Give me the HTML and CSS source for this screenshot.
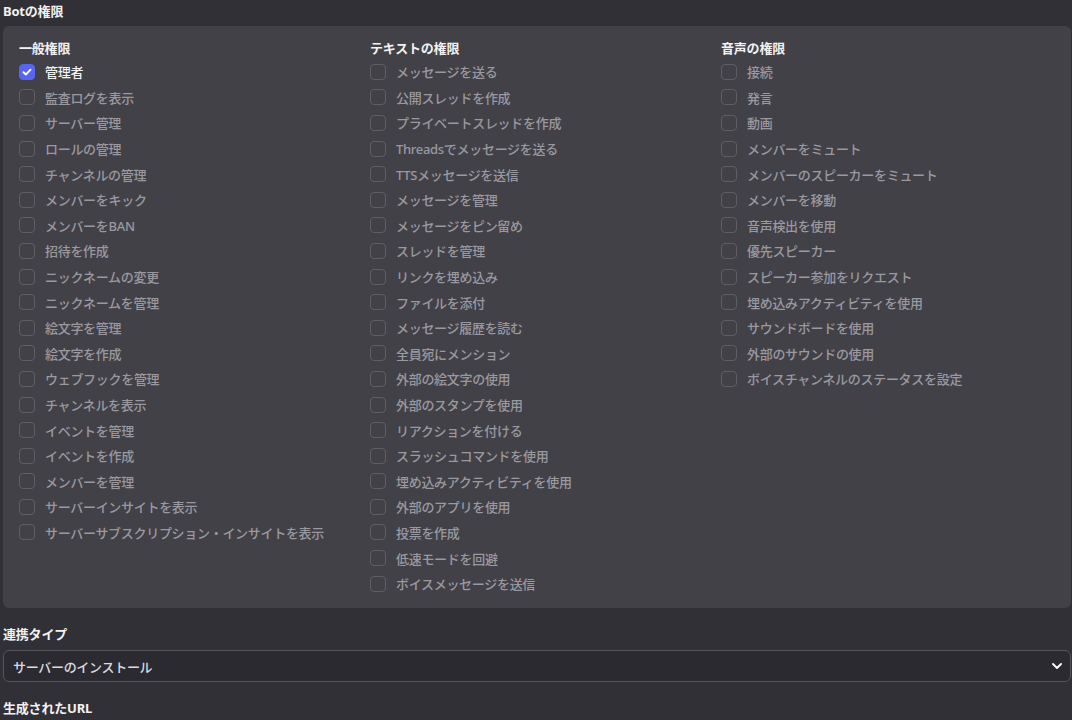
FILE: index.html
```html
<!DOCTYPE html>
<html lang="ja">
<head>
    <meta charset="UTF-8">
    <meta name="viewport" content="width=device-width, initial-scale=1.0">
    <title>Botの権限</title>
    <link rel="stylesheet" href="styles.css">
</head>
<body>
    <div class="page">
        <h2 class="section-title">Botの権限</h2>

        <div class="perm-panel">
            <div class="perm-column">
                <h3 class="column-title">一般権限</h3>
                <label class="perm-row checked"><span class="box"><svg viewBox="0 0 16 16" width="16" height="16"><path d="M4.5 8.2l2.4 2.3 4.6-4.8" fill="none" stroke="#fff" stroke-width="1.9" stroke-linecap="round" stroke-linejoin="round"/></svg></span>管理者</label>
                <label class="perm-row"><span class="box"></span>監査ログを表示</label>
                <label class="perm-row"><span class="box"></span>サーバー管理</label>
                <label class="perm-row"><span class="box"></span>ロールの管理</label>
                <label class="perm-row"><span class="box"></span>チャンネルの管理</label>
                <label class="perm-row"><span class="box"></span>メンバーをキック</label>
                <label class="perm-row"><span class="box"></span>メンバーをBAN</label>
                <label class="perm-row"><span class="box"></span>招待を作成</label>
                <label class="perm-row"><span class="box"></span>ニックネームの変更</label>
                <label class="perm-row"><span class="box"></span>ニックネームを管理</label>
                <label class="perm-row"><span class="box"></span>絵文字を管理</label>
                <label class="perm-row"><span class="box"></span>絵文字を作成</label>
                <label class="perm-row"><span class="box"></span>ウェブフックを管理</label>
                <label class="perm-row"><span class="box"></span>チャンネルを表示</label>
                <label class="perm-row"><span class="box"></span>イベントを管理</label>
                <label class="perm-row"><span class="box"></span>イベントを作成</label>
                <label class="perm-row"><span class="box"></span>メンバーを管理</label>
                <label class="perm-row"><span class="box"></span>サーバーインサイトを表示</label>
                <label class="perm-row"><span class="box"></span>サーバーサブスクリプション・インサイトを表示</label>
            </div>

            <div class="perm-column">
                <h3 class="column-title">テキストの権限</h3>
                <label class="perm-row"><span class="box"></span>メッセージを送る</label>
                <label class="perm-row"><span class="box"></span>公開スレッドを作成</label>
                <label class="perm-row"><span class="box"></span>プライベートスレッドを作成</label>
                <label class="perm-row"><span class="box"></span>Threadsでメッセージを送る</label>
                <label class="perm-row"><span class="box"></span>TTSメッセージを送信</label>
                <label class="perm-row"><span class="box"></span>メッセージを管理</label>
                <label class="perm-row"><span class="box"></span>メッセージをピン留め</label>
                <label class="perm-row"><span class="box"></span>スレッドを管理</label>
                <label class="perm-row"><span class="box"></span>リンクを埋め込み</label>
                <label class="perm-row"><span class="box"></span>ファイルを添付</label>
                <label class="perm-row"><span class="box"></span>メッセージ履歴を読む</label>
                <label class="perm-row"><span class="box"></span>全員宛にメンション</label>
                <label class="perm-row"><span class="box"></span>外部の絵文字の使用</label>
                <label class="perm-row"><span class="box"></span>外部のスタンプを使用</label>
                <label class="perm-row"><span class="box"></span>リアクションを付ける</label>
                <label class="perm-row"><span class="box"></span>スラッシュコマンドを使用</label>
                <label class="perm-row"><span class="box"></span>埋め込みアクティビティを使用</label>
                <label class="perm-row"><span class="box"></span>外部のアプリを使用</label>
                <label class="perm-row"><span class="box"></span>投票を作成</label>
                <label class="perm-row"><span class="box"></span>低速モードを回避</label>
                <label class="perm-row"><span class="box"></span>ボイスメッセージを送信</label>
            </div>

            <div class="perm-column">
                <h3 class="column-title">音声の権限</h3>
                <label class="perm-row"><span class="box"></span>接続</label>
                <label class="perm-row"><span class="box"></span>発言</label>
                <label class="perm-row"><span class="box"></span>動画</label>
                <label class="perm-row"><span class="box"></span>メンバーをミュート</label>
                <label class="perm-row"><span class="box"></span>メンバーのスピーカーをミュート</label>
                <label class="perm-row"><span class="box"></span>メンバーを移動</label>
                <label class="perm-row"><span class="box"></span>音声検出を使用</label>
                <label class="perm-row"><span class="box"></span>優先スピーカー</label>
                <label class="perm-row"><span class="box"></span>スピーカー参加をリクエスト</label>
                <label class="perm-row"><span class="box"></span>埋め込みアクティビティを使用</label>
                <label class="perm-row"><span class="box"></span>サウンドボードを使用</label>
                <label class="perm-row"><span class="box"></span>外部のサウンドの使用</label>
                <label class="perm-row"><span class="box"></span>ボイスチャンネルのステータスを設定</label>
            </div>
        </div>

        <h2 class="field-title">連携タイプ</h2>
        <div class="select-box">
            <span>サーバーのインストール</span>
            <svg class="chevron" viewBox="0 0 10 6" width="10" height="6"><path d="M1 1l4 4 4-4" fill="none" stroke="#fff" stroke-width="1.8" stroke-linecap="round" stroke-linejoin="round"/></svg>
        </div>

        <h2 class="field-title url-title">生成されたURL</h2>
    </div>
</body>
</html>
```

FILE: styles.css
```css
body {
    margin: 0;
    padding: 0;
    background-color: #313036;
    font-family: 'Noto Sans', 'Noto Sans CJK JP', sans-serif;
    color: #f2f2f3;
    overflow: hidden;
}

.page {
    padding: 0 1px 0 3px;
}

.section-title {
    margin: 0;
    height: 26px;
    line-height: 22px;
    font-size: 13px;
    font-weight: 700;
    letter-spacing: -0.2px;
}

.perm-panel {
    background-color: #424148;
    border-radius: 6px;
    padding: 14px 0 12px 16px;
    display: grid;
    grid-template-columns: 351px 351px 351px;
    align-items: start;
}

.perm-column {
    display: flex;
    flex-direction: column;
}

.column-title {
    margin: 0 0 3px 0;
    font-size: 13px;
    line-height: 16px;
    font-weight: 700;
    letter-spacing: -0.2px;
}

.perm-row {
    display: flex;
    align-items: center;
    gap: 10px;
    height: 25.6px;
    font-size: 13px;
    font-weight: 500;
    letter-spacing: -0.3px;
    color: #9a99a0;
    white-space: nowrap;
}

.box {
    width: 16px;
    height: 16px;
    box-sizing: border-box;
    border: 1px solid #5f5e65;
    border-radius: 4px;
    flex-shrink: 0;
    display: flex;
}

.perm-row.checked {
    color: #f2f2f3;
}

.perm-row.checked .box {
    background-color: #5865f2;
    border-color: #5865f2;
}

.perm-row.checked .box svg {
    margin: -1px;
}

.field-title {
    margin: 18px 0 0 0;
    font-size: 13px;
    line-height: 16px;
    font-weight: 700;
    letter-spacing: -0.2px;
}

.select-box {
    margin-top: 8px;
    height: 32px;
    box-sizing: border-box;
    border: 1px solid #56555c;
    border-radius: 6px;
    background-color: #2b2a30;
    display: flex;
    align-items: center;
    justify-content: space-between;
    padding: 0 8px 0 9px;
    font-size: 13px;
    font-weight: 500;
    letter-spacing: -0.3px;
    color: #dcdce0;
}

.chevron {
    display: block;
}

.url-title {
    margin-top: 18px;
}
```
